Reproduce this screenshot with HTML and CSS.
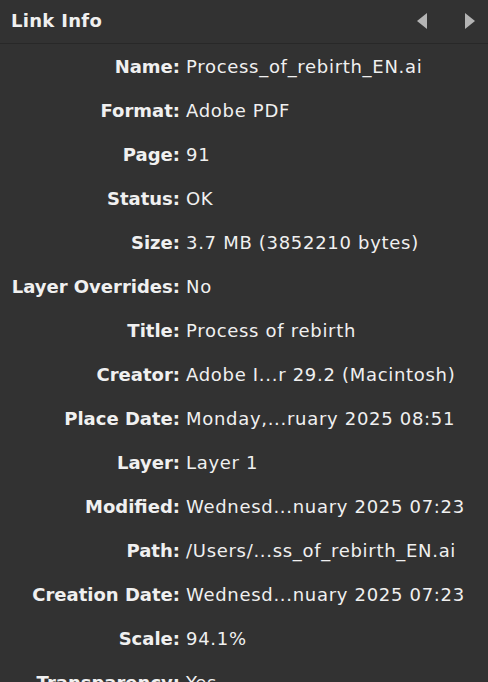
FILE: index.html
```html
<!DOCTYPE html>
<html lang="en">
<head>
    <meta charset="UTF-8">
    <title>Link Info</title>
    <link rel="stylesheet" href="styles.css">
</head>
<body>
    <header class="panel-header">
        <h1>Link Info</h1>
        <div class="nav-arrows">
            <svg width="10" height="16" viewBox="0 0 10 16"><polygon points="10,0 10,16 0,8" fill="#b4b4b4"/></svg>
            <svg width="10" height="16" viewBox="0 0 10 16"><polygon points="0,0 0,16 10,8" fill="#b4b4b4"/></svg>
        </div>
    </header>

    <main class="info-list">
        <div class="info-row"><span class="label">Name:</span><span class="value">Process_of_rebirth_EN.ai</span></div>
        <div class="info-row"><span class="label">Format:</span><span class="value">Adobe PDF</span></div>
        <div class="info-row"><span class="label">Page:</span><span class="value">91</span></div>
        <div class="info-row"><span class="label">Status:</span><span class="value">OK</span></div>
        <div class="info-row"><span class="label">Size:</span><span class="value">3.7 MB (3852210 bytes)</span></div>
        <div class="info-row"><span class="label">Layer Overrides:</span><span class="value">No</span></div>
        <div class="info-row"><span class="label">Title:</span><span class="value">Process of rebirth</span></div>
        <div class="info-row"><span class="label">Creator:</span><span class="value">Adobe I...r 29.2 (Macintosh)</span></div>
        <div class="info-row"><span class="label">Place Date:</span><span class="value">Monday,...ruary 2025 08:51</span></div>
        <div class="info-row"><span class="label">Layer:</span><span class="value">Layer 1</span></div>
        <div class="info-row"><span class="label">Modified:</span><span class="value">Wednesd...nuary 2025 07:23</span></div>
        <div class="info-row"><span class="label">Path:</span><span class="value">/Users/...ss_of_rebirth_EN.ai</span></div>
        <div class="info-row"><span class="label">Creation Date:</span><span class="value">Wednesd...nuary 2025 07:23</span></div>
        <div class="info-row"><span class="label">Scale:</span><span class="value">94.1%</span></div>
        <div class="info-row"><span class="label">Transparency:</span><span class="value">Yes</span></div>
    </main>
</body>
</html>
```

FILE: styles.css
```css
* {
    margin: 0;
    padding: 0;
    box-sizing: border-box;
}

body {
    font-family: 'DejaVu Sans', sans-serif;
    background-color: #323232;
    color: #f0f0f0;
    overflow: hidden;
}

.panel-header {
    height: 44px;
    display: flex;
    align-items: center;
    justify-content: space-between;
    padding: 0 13px 2px 11px;
    border-bottom: 1px solid #282828;
}

.panel-header h1 {
    font-size: 18px;
    font-weight: bold;
    letter-spacing: 0.3px;
}

.nav-arrows {
    display: flex;
    gap: 38px;
}

.info-list {
    display: flex;
    flex-direction: column;
}

.info-row {
    display: grid;
    grid-template-columns: 180px 1fr;
    column-gap: 6px;
    height: 44px;
    align-items: center;
    font-size: 18px;
}

.label {
    text-align: right;
    font-weight: bold;
}

.value {
    white-space: nowrap;
    letter-spacing: 0.7px;
}
```
